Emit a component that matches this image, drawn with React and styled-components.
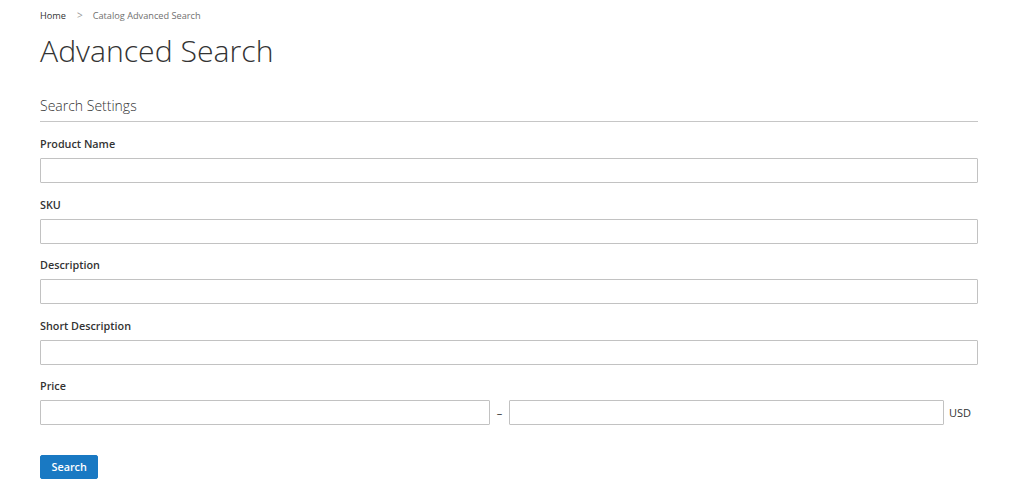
import React from 'react';
import styled, { createGlobalStyle } from 'styled-components';

const GlobalStyle = createGlobalStyle`
  body {
    margin: 0;
    background: #fff;
    font-family: "Open Sans", "Helvetica Neue", Arial, sans-serif;
    color: #333;
  }
`;

const Page = styled.div`
  padding: 0 46px 0 40px;
`;

const Breadcrumbs = styled.ul`
  display: flex;
  align-items: center;
  list-style: none;
  margin: 0;
  padding: 9px 0 0;
  height: 13px;
  font-size: 9.2px;
  line-height: 13px;
`;

const Crumb = styled.li`
  color: ${p => (p.current ? '#707070' : '#333')};
`;

const Sep = styled.span`
  margin: 0 10px 0 11px;
  color: #999;
  font-size: 10px;
`;

const Title = styled.h1`
  margin: 11px 0 0;
  font-size: 30.2px;
  font-weight: 300;
  line-height: 36px;
  color: #333;
`;

const Fieldset = styled.fieldset`
  border: 0;
  margin: 28px 0 0;
  padding: 0;
  min-width: 0;
`;

const Legend = styled.div`
  font-size: 14px;
  font-weight: 300;
  color: #333;
  line-height: 18px;
  padding-bottom: 6px;
  border-bottom: 1px solid #c6c6c6;
`;

const Fields = styled.div`
  display: flex;
  flex-direction: column;
  gap: 13.5px;
  padding-top: 14px;
`;

const Field = styled.div`
  display: flex;
  flex-direction: column;
`;

const Label = styled.label`
  font-size: 10.8px;
  font-weight: 600;
  line-height: 15px;
  margin-bottom: 7px;
  color: #333;
`;

const Input = styled.input`
  box-sizing: border-box;
  width: 100%;
  height: 25px;
  border: 1px solid #c2c2c2;
  border-radius: 1px;
  background: #fff;
  margin: 0;
  padding: 0 8px;
  font: inherit;
`;

const PriceRow = styled.div`
  display: flex;
  align-items: center;
`;

const PriceInput = styled(Input)`
  width: ${p => p.w}px;
  flex: none;
`;

const Dash = styled.span`
  width: 19px;
  text-align: center;
  font-size: 11px;
`;

const Currency = styled.span`
  margin-left: 5px;
  font-size: 11px;
`;

const Actions = styled.div`
  padding-top: 29px;
`;

const Button = styled.button`
  background: #1979c3;
  border: 1px solid #1979c3;
  color: #fff;
  font-family: inherit;
  font-size: 10.8px;
  font-weight: 600;
  border-radius: 2px;
  height: 24px;
  padding: 0 10.5px;
  line-height: 22px;
  cursor: pointer;
`;

const fields = ['Product Name', 'SKU', 'Description', 'Short Description'];

export default function App() {
  return (
    <>
      <GlobalStyle />
      <Page>
        <Breadcrumbs>
          <Crumb>Home</Crumb>
          <Sep>&gt;</Sep>
          <Crumb current>Catalog Advanced Search</Crumb>
        </Breadcrumbs>
        <Title>Advanced Search</Title>
        <Fieldset>
          <Legend>Search Settings</Legend>
          <Fields>
            {fields.map(f => (
              <Field key={f}>
                <Label>{f}</Label>
                <Input type="text" />
              </Field>
            ))}
            <Field>
              <Label>Price</Label>
              <PriceRow>
                <PriceInput type="text" w={450} />
                <Dash>–</Dash>
                <PriceInput type="text" w={435} />
                <Currency>USD</Currency>
              </PriceRow>
            </Field>
          </Fields>
        </Fieldset>
        <Actions>
          <Button>Search</Button>
        </Actions>
      </Page>
    </>
  );
}
